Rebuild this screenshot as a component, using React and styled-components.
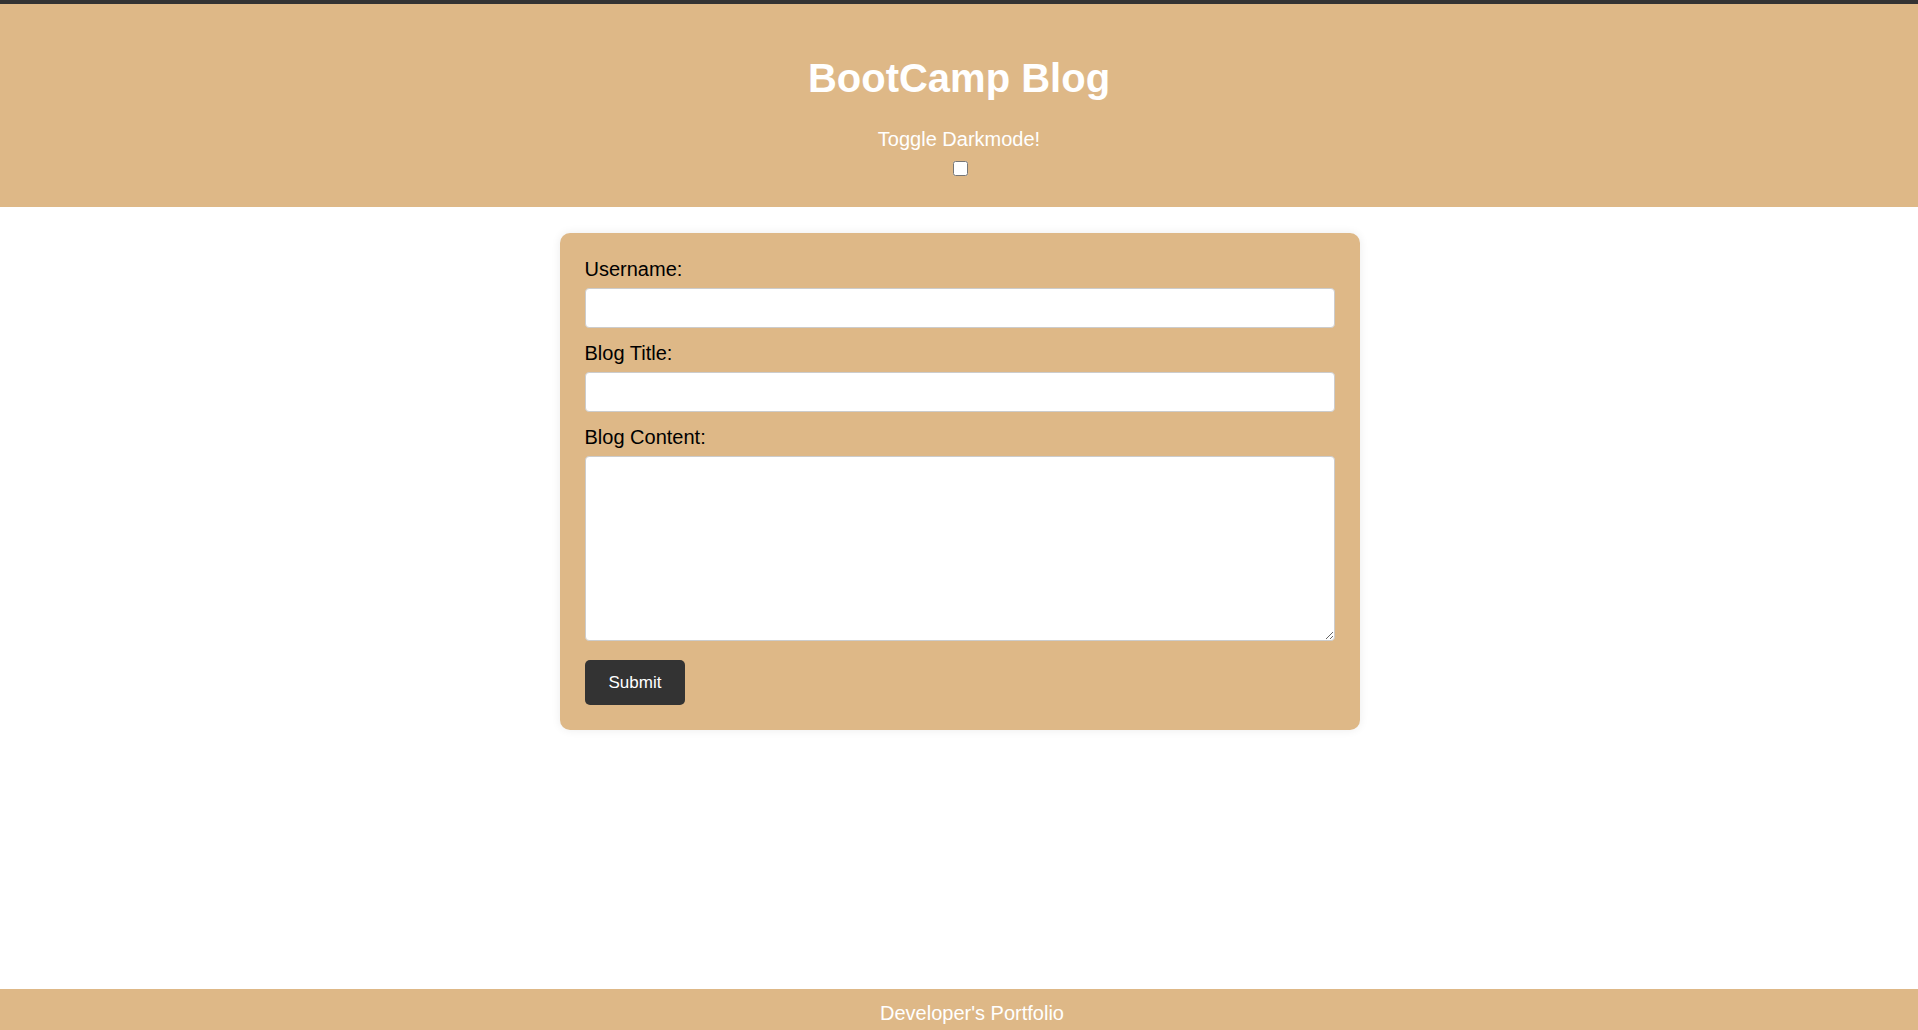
import React, { useState } from "react";
import styled, { createGlobalStyle } from "styled-components";

const GlobalStyle = createGlobalStyle`
  html, body {
    margin: 0;
    padding: 0;
    background: #fff;
    font-family: "Liberation Sans", Arial, sans-serif;
  }
  * { box-sizing: border-box; }
`;

const Page = styled.div`
  min-height: 100vh;
  display: flex;
  flex-direction: column;
  border-top: 4px solid #333;
`;

const HeaderStyled = styled.header`
  background-color: #deb887;
  color: #fff;
  display: flex;
  flex-direction: column;
  align-items: center;
  padding: 51px 0 31px;

  .header {
    &__title {
      margin: 0 0 27px;
      font-size: 40px;
      line-height: 46px;
      font-weight: bold;
    }

    &__toggle {
      font-size: 20px;
      line-height: 23px;
    }
  }
`;

const Checkbox = styled.input`
  width: 15px;
  height: 15px;
  margin: 10px 0 0 2px;
`;

const Main = styled.main`
  flex: 1;
  padding: 26px 0 0 1px;
`;

const FormCard = styled.form`
  width: 800px;
  margin: 0 auto;
  padding: 25px;
  background-color: #deb887;
  border-radius: 10px;
  box-shadow: 0 0 10px rgba(0, 0, 0, 0.08);
  display: flex;
  flex-direction: column;
  align-items: flex-start;
`;

const Label = styled.label`
  display: block;
  font-size: 20px;
  line-height: 23px;
  color: #000;
  margin-bottom: 7px;
`;

const Field = styled.input`
  width: 100%;
  height: 40px;
  margin: 0 0 14px;
  padding: 0 10px;
  border: 1px solid #ccc;
  border-radius: 4px;
  background: #fff;
  font-size: 16px;
  font-family: inherit;
`;

const TextArea = styled.textarea`
  width: 100%;
  height: 185px;
  margin: 0 0 19px;
  padding: 10px;
  border: 1px solid #ccc;
  border-radius: 4px;
  background: #fff;
  font-size: 16px;
  font-family: inherit;
  display: block;
`;

const SubmitButton = styled.button`
  height: 45px;
  padding: 0 24px;
  border: none;
  border-radius: 5px;
  background-color: #333;
  color: #fff;
  font-size: 17px;
  font-family: inherit;
  cursor: pointer;
`;

const Footer = styled.footer`
  background-color: #deb887;
  color: #fff;
  height: 41px;
  padding: 13px 0 0 26px;
  text-align: center;
  font-size: 20px;
  line-height: 23px;
`;

const App = () => {
    const [dark, setDark] = useState(false);

    return (
        <>
            <GlobalStyle />
            <Page>
                <HeaderStyled>
                    <h1 className="header__title">BootCamp Blog</h1>
                    <span className="header__toggle">Toggle Darkmode!</span>
                    <Checkbox
                        type="checkbox"
                        checked={dark}
                        onChange={() => setDark(!dark)}
                    />
                </HeaderStyled>

                <Main>
                    <FormCard onSubmit={(e) => e.preventDefault()}>
                        <Label htmlFor="username">Username:</Label>
                        <Field id="username" type="text" />
                        <Label htmlFor="title">Blog Title:</Label>
                        <Field id="title" type="text" />
                        <Label htmlFor="content">Blog Content:</Label>
                        <TextArea id="content" />
                        <SubmitButton type="submit">Submit</SubmitButton>
                    </FormCard>
                </Main>

                <Footer>Developer's Portfolio</Footer>
            </Page>
        </>
    );
};

export default App;
